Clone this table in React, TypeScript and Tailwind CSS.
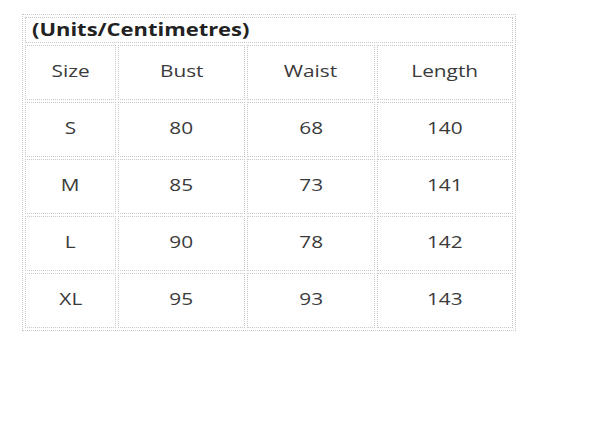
import React from "react";

const rows = [
  ["S", "80", "68", "140"],
  ["M", "85", "73", "141"],
  ["L", "90", "78", "142"],
  ["XL", "95", "93", "143"],
];

const cell = "border border-dotted border-[#c8c8c8] text-center align-middle p-0 pb-[3px] text-[16px]";

const Txt: React.FC<{ children: React.ReactNode }> = ({ children }) => (
  <span className="inline-block scale-x-[1.3]">{children}</span>
);

const App: React.FC = () => {
  return (
    <div className="w-[594px] h-[425px] bg-white pt-[14px] pl-[22px] font-['Open_Sans',sans-serif] text-[#3a3a3a]">
      <table className="w-[494px] table-fixed border-separate border-spacing-[2px] border border-dotted border-[#c8c8c8]">
        <colgroup>
          <col className="w-[91px]" />
          <col className="w-[127px]" />
          <col className="w-[128px]" />
          <col className="w-[136px]" />
        </colgroup>
        <tbody>
          <tr className="h-[25px]">
            <td colSpan={4} className="border border-dotted border-[#c8c8c8] p-0 pl-[6px] text-left">
              <span className="inline-block origin-left scale-x-[1.29] text-[17px] font-bold leading-none text-[#222]">
                (Units/Centimetres)
              </span>
            </td>
          </tr>
          <tr className="h-[55px]">
            {["Size", "Bust", "Waist", "Length"].map((h) => (
              <td key={h} className={cell}>
                <Txt>{h}</Txt>
              </td>
            ))}
          </tr>
          {rows.map((r) => (
            <tr key={r[0]} className="h-[55px]">
              {r.map((v, i) => (
                <td key={i} className={cell}>
                  <Txt>{v}</Txt>
                </td>
              ))}
            </tr>
          ))}
        </tbody>
      </table>
    </div>
  );
};

export default App;
